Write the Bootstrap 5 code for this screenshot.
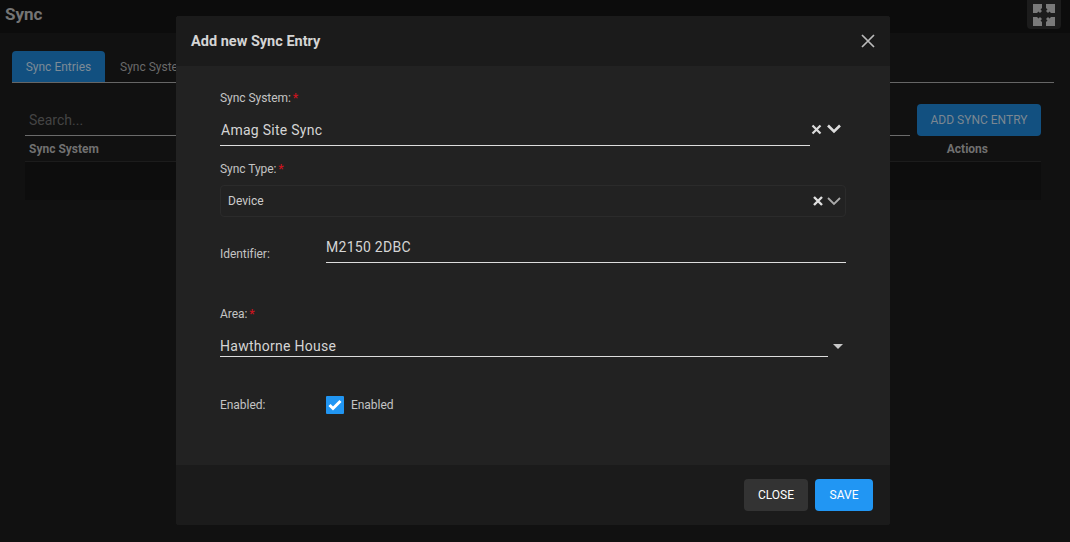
<!doctype html>
<html lang="en">
<head>
<meta charset="utf-8">
<title>Sync</title>
<link href="https://cdn.jsdelivr.net/npm/bootstrap@5.3.0/dist/css/bootstrap.min.css" rel="stylesheet">
<style>
html,body{height:542px;overflow:hidden}
body{background:#111;font-family:Roboto,"Liberation Sans",sans-serif;color:#777;font-size:12px;position:relative}
.topbar{height:33px;background:#0c0c0c;padding-left:5px}
.pagetitle{font-size:17px;font-weight:700;color:#757575;line-height:29px;margin:0}
.fsbtn{width:34px;height:29px;background:#1c1c1c;border-radius:0 0 4px 4px;margin-right:9px}
.pagebody{padding:18px 16px 0 12px}
.tabrow{height:32px;border-bottom:1px solid #666;gap:15px}
.tabon{width:93px;height:31px;background:#125080;border-radius:4px 4px 0 0;color:#7d8b96;line-height:32px;text-align:center}
.taboff{line-height:32px;color:#6a6a6a}
.toolrow{margin:21px 0 0 13px;height:32px}
.searchbox{width:885px;height:32px;border-bottom:1px solid #6b6b6b;font-size:14px;color:#444;padding:6px 4px}
.addbtn{width:124px;height:32px;margin-left:7px;background:#125080;color:#7b8791;border-radius:4px;line-height:32px;text-align:center}
.gridhead{margin:0 13px;height:26px;border-bottom:1px solid #1c1c1c;font-weight:700;color:#707070;padding:4px 53px 0 4px}
.gridrow{margin:0 13px;height:38px;background:#0d0d0d}
.dlgwrap{position:absolute;left:176px;top:16px;width:714px;height:509px}
.dlg{height:100%;background:#222;border:0;border-radius:3px;color:#ccc;overflow:hidden}
.dlghead{height:50px;background:#1b1b1b;padding:0 15px 0 15px;flex:none}
.dlgtitle{font-size:14.500px;font-weight:700;color:#d4d4d4;margin:0;line-height:51px}
.xbtn{width:14px;height:14px;display:block}
.dlgbody{flex:1;padding:0 44px}
.dlgfoot{height:60px;background:#1b1b1b;padding:0 17px;flex:none;gap:7px}
.flab{color:#c4c4c4;line-height:14px;margin:0;display:block;letter-spacing:-.05px}
.req{color:#c8141e;margin-left:-1px;font-weight:700}
.linefield{font-size:14px;letter-spacing:.27px;color:#d5d5d5;border-bottom:1px solid #ddd}
.lab1{margin-top:25px}
.field1{width:590px;height:28px;margin-top:13px;padding-left:1px;line-height:24px}
.lab2{margin-top:16px}
.selbox{width:626px;height:32px;margin-top:9px;border:1px solid #2b2b2b;border-radius:4px;padding:0 4px 0 7px;color:#ccc}
.rowident{margin-top:14px;height:32px}
.labwide{width:106px;padding-top:16px}
.field3{width:520px;height:32px;line-height:33px}
.lab4{margin-top:44px}
.field4{width:608px;height:23px;margin-top:13px;line-height:24px}
.caret4{width:0;height:0;border-left:5px solid transparent;border-right:5px solid transparent;border-top:5px solid #c8c8c8;margin:23px 0 0 5px}
.rowenable{margin-top:39px;height:18px}
.chkbox{width:18px;height:18px;background:#2196f3;border-radius:1px;margin-right:7px}
.actbtn{height:32px;border:0;border-radius:4px;font-size:12px;font-weight:400;color:#fff;padding:0;line-height:32px}
.btnclose{width:64px;background:#333}
.btnsave{width:58px;background:#2196f3}
.actbtn:hover{color:#fff}
.btnclose:hover{background:#333}
.btnsave:hover{background:#2196f3}
.clearx{margin:19px 6px 0 1px}
.downv{margin:19px 0 0 -1px}
.clearx2{margin-right:3px}
</style>
</head>
<body>
<div class="topbar d-flex justify-content-between align-items-start">
  <h1 class="pagetitle">Sync</h1>
  <div class="fsbtn d-flex align-items-center justify-content-center">
    <svg width="22" height="22" viewBox="0 0 22 22" fill="#7a7a7a" aria-hidden="true">
      <path d="M0 0h9v4L7.500 5.500 9 7 7 9 5.500 7.500 4 9H0z"/>
      <path transform="matrix(-1 0 0 1 22 0)" d="M0 0h9v4L7.500 5.500 9 7 7 9 5.500 7.500 4 9H0z"/>
      <path transform="matrix(1 0 0 -1 0 22)" d="M0 0h9v4L7.500 5.500 9 7 7 9 5.500 7.500 4 9H0z"/>
      <path transform="matrix(-1 0 0 -1 22 22)" d="M0 0h9v4L7.500 5.500 9 7 7 9 5.500 7.500 4 9H0z"/>
    </svg>
  </div>
</div>
<main class="pagebody">
  <div class="tabrow d-flex">
    <div class="tabon">Sync Entries</div>
    <div class="taboff">Sync Systems</div>
  </div>
  <div class="toolrow d-flex">
    <div class="searchbox">Search...</div>
    <div class="addbtn">ADD SYNC ENTRY</div>
  </div>
  <div class="gridhead d-flex justify-content-between">
    <span>Sync System</span><span>Actions</span>
  </div>
  <div class="gridrow"></div>
</main>

<div class="dlgwrap">
  <div class="modal-content dlg d-flex flex-column">
    <div class="dlghead d-flex align-items-center justify-content-between">
      <h5 class="dlgtitle">Add new Sync Entry</h5>
      <svg class="xbtn" viewBox="0 0 14 14" stroke="#bbb" stroke-width="1.700" aria-hidden="true"><path d="M1 1l12 12M13 1L1 13"/></svg>
    </div>
    <div class="dlgbody">
      <label class="flab lab1">Sync System: <span class="req">*</span></label>
      <div class="d-flex">
        <div class="linefield field1">Amag Site Sync</div>
        <div class="d-flex align-items-start">
          <svg class="clearx" width="11" height="11" viewBox="0 0 11 11" aria-hidden="true" stroke="#ddd" stroke-width="2.200"><path d="M1.500 1.500l8 8M9.500 1.500l-8 8"/></svg>
          <svg class="downv" width="14" height="10" viewBox="0 0 14 10" fill="none" aria-hidden="true" stroke="#ddd" stroke-width="2.600"><path d="M1 1.500l6 6 6-6"/></svg>
        </div>
      </div>
      <label class="flab lab2">Sync Type: <span class="req">*</span></label>
      <div class="selbox d-flex align-items-center justify-content-between">
        <span>Device</span>
        <span class="d-flex align-items-center">
          <svg class="clearx2" width="12" height="12" viewBox="0 0 12 12" aria-hidden="true" stroke="#e0e0e0" stroke-width="2.400"><path d="M2 2l8 8M10 2l-8 8"/></svg>
          <svg width="14" height="10" viewBox="0 0 14 10" fill="none" aria-hidden="true" stroke="#aaa" stroke-width="1.800"><path d="M1 2l6 6 6-6"/></svg>
        </span>
      </div>
      <div class="rowident d-flex">
        <label class="flab labwide">Identifier:</label>
        <div class="linefield field3">M2150 2DBC</div>
      </div>
      <label class="flab lab4">Area: <span class="req">*</span></label>
      <div class="d-flex">
        <div class="linefield field4">Hawthorne House</div>
        <div class="caret4"></div>
      </div>
      <div class="rowenable d-flex align-items-center">
        <label class="flab labwide pt-0">Enabled:</label>
        <div class="chkbox d-flex align-items-center justify-content-center">
          <svg width="14" height="12" viewBox="0 0 14 12" fill="none" aria-hidden="true" stroke="#fff" stroke-width="3"><path d="M1.500 6l3.500 3.500L12.500 2"/></svg>
        </div>
        <span class="flab">Enabled</span>
      </div>
    </div>
    <div class="dlgfoot d-flex align-items-center justify-content-end">
      <button type="button" class="btn actbtn btnclose">CLOSE</button>
      <button type="button" class="btn actbtn btnsave">SAVE</button>
    </div>
  </div>
</div>
<script src="https://cdn.jsdelivr.net/npm/bootstrap@5.3.0/dist/js/bootstrap.bundle.min.js"></script>
</body>
</html>
